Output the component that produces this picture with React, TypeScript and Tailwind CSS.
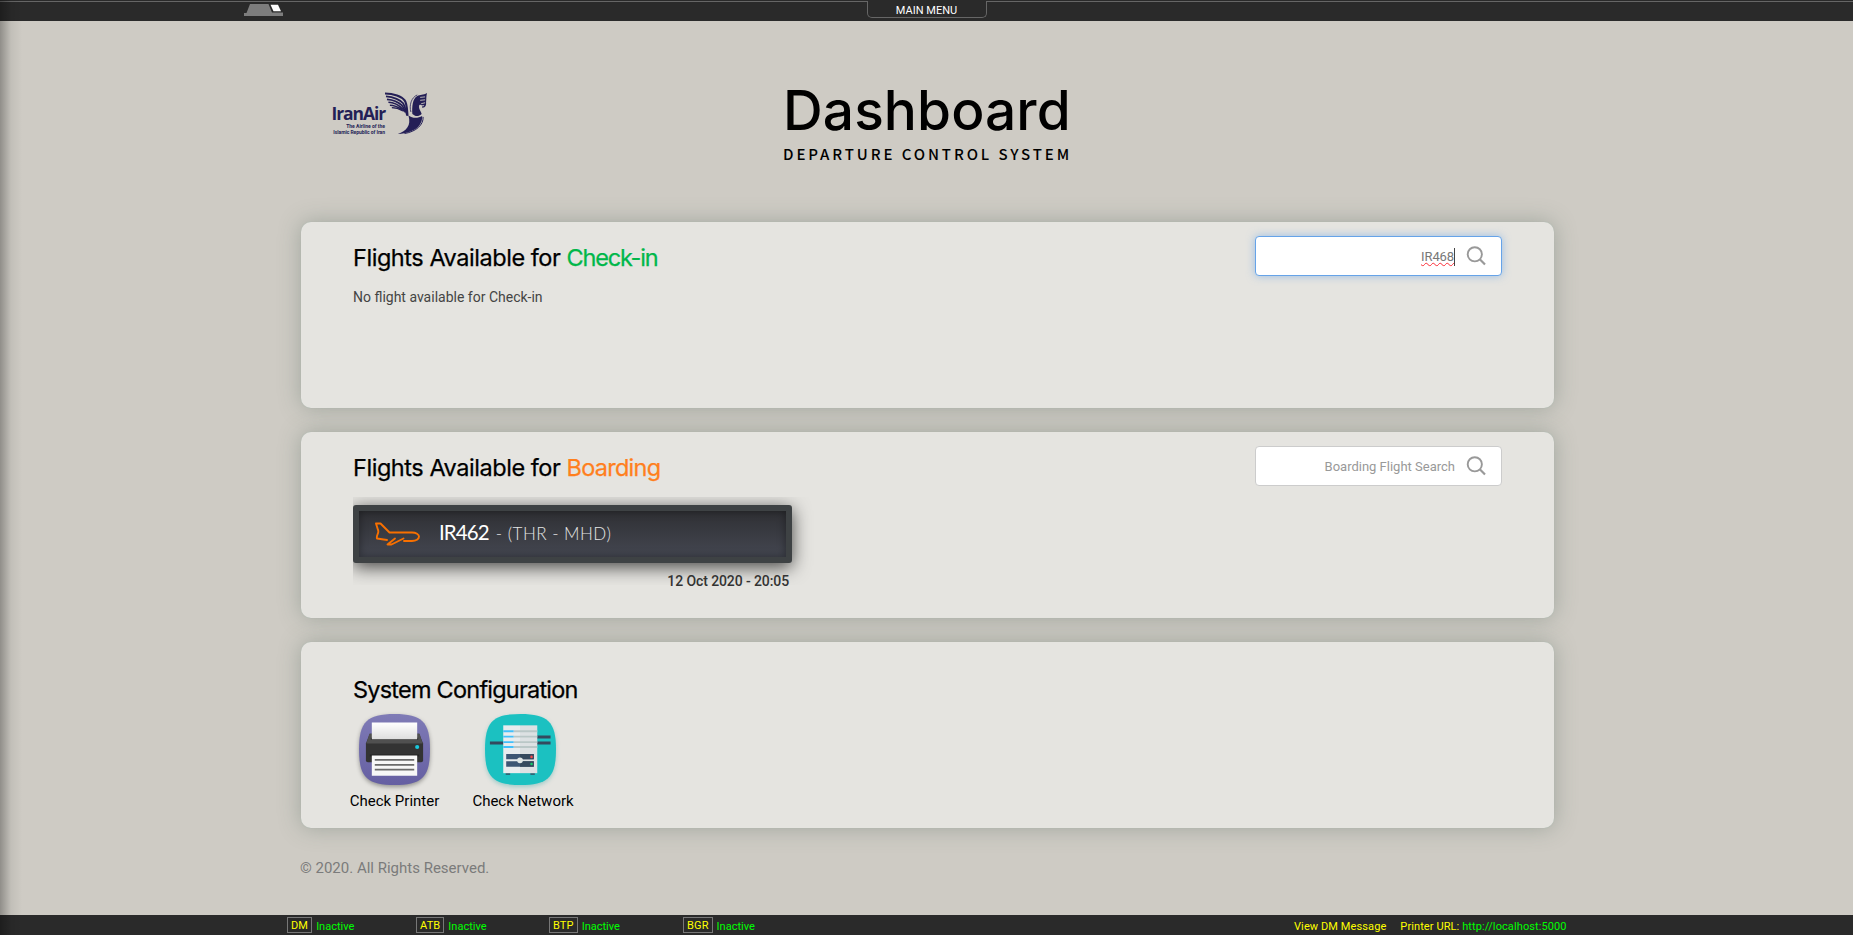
import React from "react";

const heading = "font-['Inter'] font-normal text-[23.5px] leading-[30px] text-black whitespace-nowrap [-webkit-text-stroke:0.25px]";

function MenuHat() {
  return (
    <svg className="block" width="40" height="12" viewBox="0 0 40 12">
      <path d="M6 0H24.500L28 8.500H39V12H0V9H2.500Z" fill="#7d7d7d" />
      <path d="M26.500 .7H34L37 7.200H29.500Z" fill="#fff" />
    </svg>
  );
}

function SearchIcon() {
  return (
    <svg width="20" height="20" viewBox="0 0 20 20" fill="none" stroke="#999" strokeWidth="1.900">
      <circle cx="8.800" cy="8.300" r="7.100" />
      <path d="M13.800 13.300L19 18.500" strokeWidth="2.200" />
    </svg>
  );
}

function Homa() {
  return (
    <svg className="block" width="43" height="43" viewBox="0 0 44 43">
      <g fill="none" stroke="#241f56" strokeLinecap="butt">
        <path d="M0 1C9 1 17 4 20 8C22.500 11 22.500 17 23 24" strokeWidth="2.200" />
        <path d="M1 4C9 4.500 16 8 18.500 11C20.500 14 21 18 22.500 23" strokeWidth="1.900" />
        <path d="M2 7C9 7.500 14 10 17 13C19 15 20 18 21 20.500" strokeWidth="1.800" />
        <path d="M3.500 10C9 10.500 13 12 16 15C18 16.500 19 18 20 19.500" strokeWidth="1.700" />
        <path d="M5 13C9 13 13 14.500 17.500 17.500" strokeWidth="1.600" />
        <path d="M7 15.600C11 15.600 14 16.500 18.500 19" strokeWidth="1.300" />
        <path d="M39 25C39.500 33 32 40 20 42" strokeWidth="1" />
        <path d="M26.500 20C24.500 13 27 5 33 2.500" strokeWidth=".8" />
      </g>
      <path d="M28 22C27.500 15 28 6 33 3.500C36 2 39 3 43 0.500C42 4 42.500 7 42 10C42.500 13 41 16 38 15.500C39 13 36.500 12 35 13C34 17 37 19 37.500 22C34 25 31 24.500 28 22Z" fill="#241f56" />
      <path d="M24 23.500C29 27 34 26 38 24C38.500 32 33 41 13 42.500C22 39 27 34 24 23.500Z" fill="#241f56" />
      <path d="M36 5L41 4.500M36 8L41 7.500M37 11.500L41 10.500M38 13.500H40" stroke="#cecbc4" strokeWidth=".9" />
    </svg>
  );
}

function Plane() {
  return (
    <svg className="block" width="46" height="24" viewBox="0 0 46 24" fill="none" stroke="#f87000" strokeWidth="1.900" strokeLinejoin="round" strokeLinecap="round">
      <path d="M12 18L2 16.500C1 13 4.500 11 3 8L1 1.500H5.500L14.500 10.500H37C41 10.500 44 12.500 44 14.500C44 17 41 19 37 19H29" />
      <path d="M20 16.500L12.500 22.500H16.500L28.500 16.500" />
    </svg>
  );
}

const blob = "M36 0C64 0 72 8 72 36C72 64 64 72 36 72C8 72 0 64 0 36C0 8 8 0 36 0Z";

function PrinterIcon() {
  return (
    <svg className="block overflow-visible drop-shadow-[0_2px_2px_rgba(0,0,0,0.35)]" width="71" height="71" viewBox="0 0 72 72">
      <defs>
        <linearGradient id="violet" x2="0" y2="1"><stop stopColor="#7f7bb6" /><stop offset="1" stopColor="#655fa2" /></linearGradient>
        <linearGradient id="sheet" x2="0" y2="1"><stop stopColor="#fff" /><stop offset="1" stopColor="#dedede" /></linearGradient>
      </defs>
      <path d={blob} fill="url(#violet)" />
      <path d="M11 20H61L65 30V47Q65 49 63 49H9Q7 49 7 47V30Z" fill="#333" />
      <path d="M10.500 20H61.500L64.500 30H7.500Z" fill="#505050" />
      <path d="M12 24H60V26H12Z" fill="#2b2b2b" />
      <path d="M13 8.500H59V25.500H13Z" fill="url(#sheet)" />
      <path d="M11 41H61V43H11Z" fill="#222" />
      <path d="M13 42H59V62.500H13Z" fill="#f7f7f7" />
      <path d="M16 46.500H56M16 51.500H56M16 56.500H56" stroke="#6b6b6b" strokeWidth="1.800" />
      <circle cx="59" cy="33.500" r="2.100" fill="#19c8dd" />
    </svg>
  );
}

function NetworkIcon() {
  return (
    <svg className="block overflow-visible drop-shadow-[0_2px_2px_rgba(0,150,150,0.3)]" width="71" height="71" viewBox="0 0 72 72">
      <path d={blob} fill="#1bc1c1" />
      <path d="M5 29.500H20M52 23.300H66.500M52 29.500H66.500" stroke="#34495e" strokeWidth="3" />
      <path d="M21 60H25.500V61.700H21ZM46 60H50.500V61.700H46Z" fill="#34495e" />
      <path d="M18.500 11.500H35.500V60H18.500Z" fill="#e8ecee" />
      <path d="M35.500 11.500H53V60H35.500Z" fill="#dce1e3" />
      <path d="M29 17.500H53M29 23H53M29 28.500H53M29 33.500H53" stroke="#b9c7c7" strokeWidth="1.900" />
      <path d="M18.500 17.500H29M18.500 23H29M18.500 28.500H29M18.500 33.500H29" stroke="#41c0fb" strokeWidth="1.900" />
      <path d="M21.500 40.500H49.500V46H21.500ZM21.500 48H49.500V53.500H21.500Z" fill="#3d5674" />
      <path d="M35.500 40.500H49.500V46H35.500ZM35.500 48H49.500V53.500H35.500Z" fill="#34495e" />
      <circle cx="35.500" cy="47" r="2.900" fill="#dfe6e6" />
      <circle cx="47.200" cy="43.500" r="1.300" fill="#f44a4a" />
      <circle cx="47.200" cy="50.700" r="1.300" fill="#13ce66" />
    </svg>
  );
}

const card = "h-[186px] rounded-[10px] bg-[#e5e4e0] pl-[52px] pr-[52px] shadow-[0_0_1px_rgba(150,180,170,0.6),0_0_22px_rgba(85,105,95,0.38)]";

function Status({ code, width }: { code: string; width: string }) {
  return (
    <div className={`flex ${width} shrink-0 items-start gap-1`}>
      <span className="mt-[2px] h-4 border border-[#777] px-[3px] text-[11px] leading-[15px] tracking-[0.15px] text-[#ff0]">{code}</span>
      <span className="mt-[4px] text-[11px] leading-[15px] text-[#0f0]">Inactive</span>
    </div>
  );
}

export default function App() {
  return (
    <div className="relative flex h-[935px] w-[1853px] flex-col overflow-hidden bg-[#cecbc4] font-['Roboto',sans-serif]">
      <header className="flex h-[21px] shrink-0 bg-[#2a2a2a] pt-px">
        <div className="flex h-px w-[867px] bg-[#666]"><div className="ml-[244px] mt-[3px]"><MenuHat /></div></div>
        <div className="flex h-[17px] w-[120px] justify-center rounded-b-[5px] border border-t-0 border-[#666] pr-px text-[11px] leading-[19px] text-white">MAIN MENU</div>
        <div className="h-px flex-1 bg-[#666]" />
      </header>

      <main className="mx-[301px] w-[1253px] flex-1">
        <div className="flex h-[201px]">
          <div className="flex w-[482px] pl-8 pt-[71px]">
            <div className="flex w-[52px] flex-col items-end text-[#241f56]">
              <span className="mt-[12px] font-['Open_Sans'] text-[17.5px] font-bold leading-[18px] tracking-[-1.1px]">IranAir</span>
              <span className="mt-px whitespace-nowrap text-[5px] font-bold leading-[6px]">The Airline of the</span>
              <span className="whitespace-nowrap text-[5px] font-bold leading-[6px] tracking-[-0.05px]">Islamic Republic of Iran</span>
            </div>
            <Homa />
          </div>
          <div className="pt-[54px] text-black">
            <h1 className="font-['Inter'] text-[55px] leading-[70px] font-medium tracking-[0.1px]">Dashboard</h1>
            <p className="mt-[-3px] font-['Noto_Sans_CJK_SC',sans-serif] text-[15px] font-medium leading-[24px] tracking-[2.9px] whitespace-nowrap">DEPARTURE CONTROL SYSTEM</p>
          </div>
        </div>

        <div className="flex flex-col gap-6">
          <section className={card}>
            <div className="flex justify-between">
              <div className="pt-[21px]">
                <h2 className={heading + " tracking-[-0.45px]"}>Flights Available for <span className="text-[#00b74a] tracking-[-1.2px]">Check-in</span></h2>
                <p className="mt-[14px] text-[14px] leading-[20px] text-[#444]">No flight available for Check-in</p>
              </div>
              <div className="mt-[14px] flex h-10 w-[247px] items-center justify-end rounded-[4px] border border-[#66a3e8] bg-white pr-[15px] shadow-[0_0_8px_rgba(102,163,232,0.6)]">
                <span className="mt-px border-r border-[#444] text-[13px] leading-[18px] tracking-[-0.1px] text-[#777]"><span className="underline decoration-red-500 decoration-wavy decoration-1">IR468</span></span>
                <span className="ml-[11px]"><SearchIcon /></span>
              </div>
            </div>
          </section>

          <section className={card}>
            <div className="flex justify-between">
              <div className="pt-[21px]">
                <h2 className={heading + " tracking-[-0.45px]"}>Flights Available for <span className="text-[#ff7f1d] tracking-[-0.75px]">Boarding</span></h2>
                <div className="mt-[14px] w-[480px] overflow-hidden pb-[22px] pt-[8px]">
                  <div className="flex h-[58px] w-[439px] items-center rounded-[3px] border-[6px] border-[#3e4244] bg-[#2f3034] bg-linear-to-b from-[#2f3034] to-[#444751] pl-[15.5px] shadow-[0_4px_18px_rgba(0,0,0,0.7),inset_0_0_8px_rgba(0,0,0,0.4)]">
                    <Plane />
                    <div className="-mt-[3px] ml-[18.5px] flex items-baseline">
                      <span className="font-['Lato'] text-[20.5px] tracking-[-0.9px] text-white">IR462</span>
                      <span className="ml-[7px] font-['Lato'] text-[17px] font-light tracking-[0.5px] text-[#e4e4e4]">- (THR - MHD)</span>
                    </div>
                  </div>
                </div>
                <p className="relative -mt-[14px] w-[436px] text-right text-[14px] font-medium leading-[20px] tracking-[-0.1px] text-[#333]">12 Oct 2020 - 20:05</p>
              </div>
              <div className="mt-[14px] flex h-10 w-[247px] items-center justify-end rounded-[4px] border border-[#ccc] bg-white pr-[15px]">
                <span className="mt-px text-[13px] text-[#999]">Boarding Flight Search</span>
                <span className="ml-[11px]"><SearchIcon /></span>
              </div>
            </div>
          </section>

          <section className={card}>
            <h2 className={heading + " pt-[33px] tracking-[-0.78px]"}>System Configuration</h2>
            <div className="-ml-[3px] mt-[9px] flex gap-[33px] text-[15px] leading-[20px] text-black">
              <div className="flex w-[90px] flex-col items-center gap-[6px]"><span className="mr-px"><PrinterIcon /></span><span className="mr-px whitespace-nowrap">Check Printer</span></div>
              <div className="flex w-[101px] flex-col items-center gap-[6px]"><span className="mr-[6px]"><NetworkIcon /></span><span className="mr-px whitespace-nowrap">Check Network</span></div>
            </div>
          </section>
        </div>
        <p className="-ml-px mt-[30px] text-[15px] leading-[20px] text-[#7b7b7b]">© 2020. All Rights Reserved.</p>
      </main>

      <footer className="flex h-5 shrink-0 bg-[#2a2a2a] pl-[287px]">
        <Status code="DM" width="w-[129px]" />
        <Status code="ATB" width="w-[133px]" />
        <Status code="BTP" width="w-[134px]" />
        <Status code="BGR" width="w-[611px]" />
        <span className="mt-[4px] text-[11px] leading-[15px] tracking-[0.1px] text-[#ff0]">View DM Message</span>
        <span className="ml-[14px] mt-[4px] text-[11px] leading-[15px] tracking-[0.1px] text-[#ff0]">Printer URL: <span className="text-[#0f0]">http://localhost:5000</span></span>
      </footer>
      <div className="absolute inset-y-0 left-0 w-[22px] bg-linear-to-r from-black/30 via-black/6 to-transparent" />
    </div>
  );
}
